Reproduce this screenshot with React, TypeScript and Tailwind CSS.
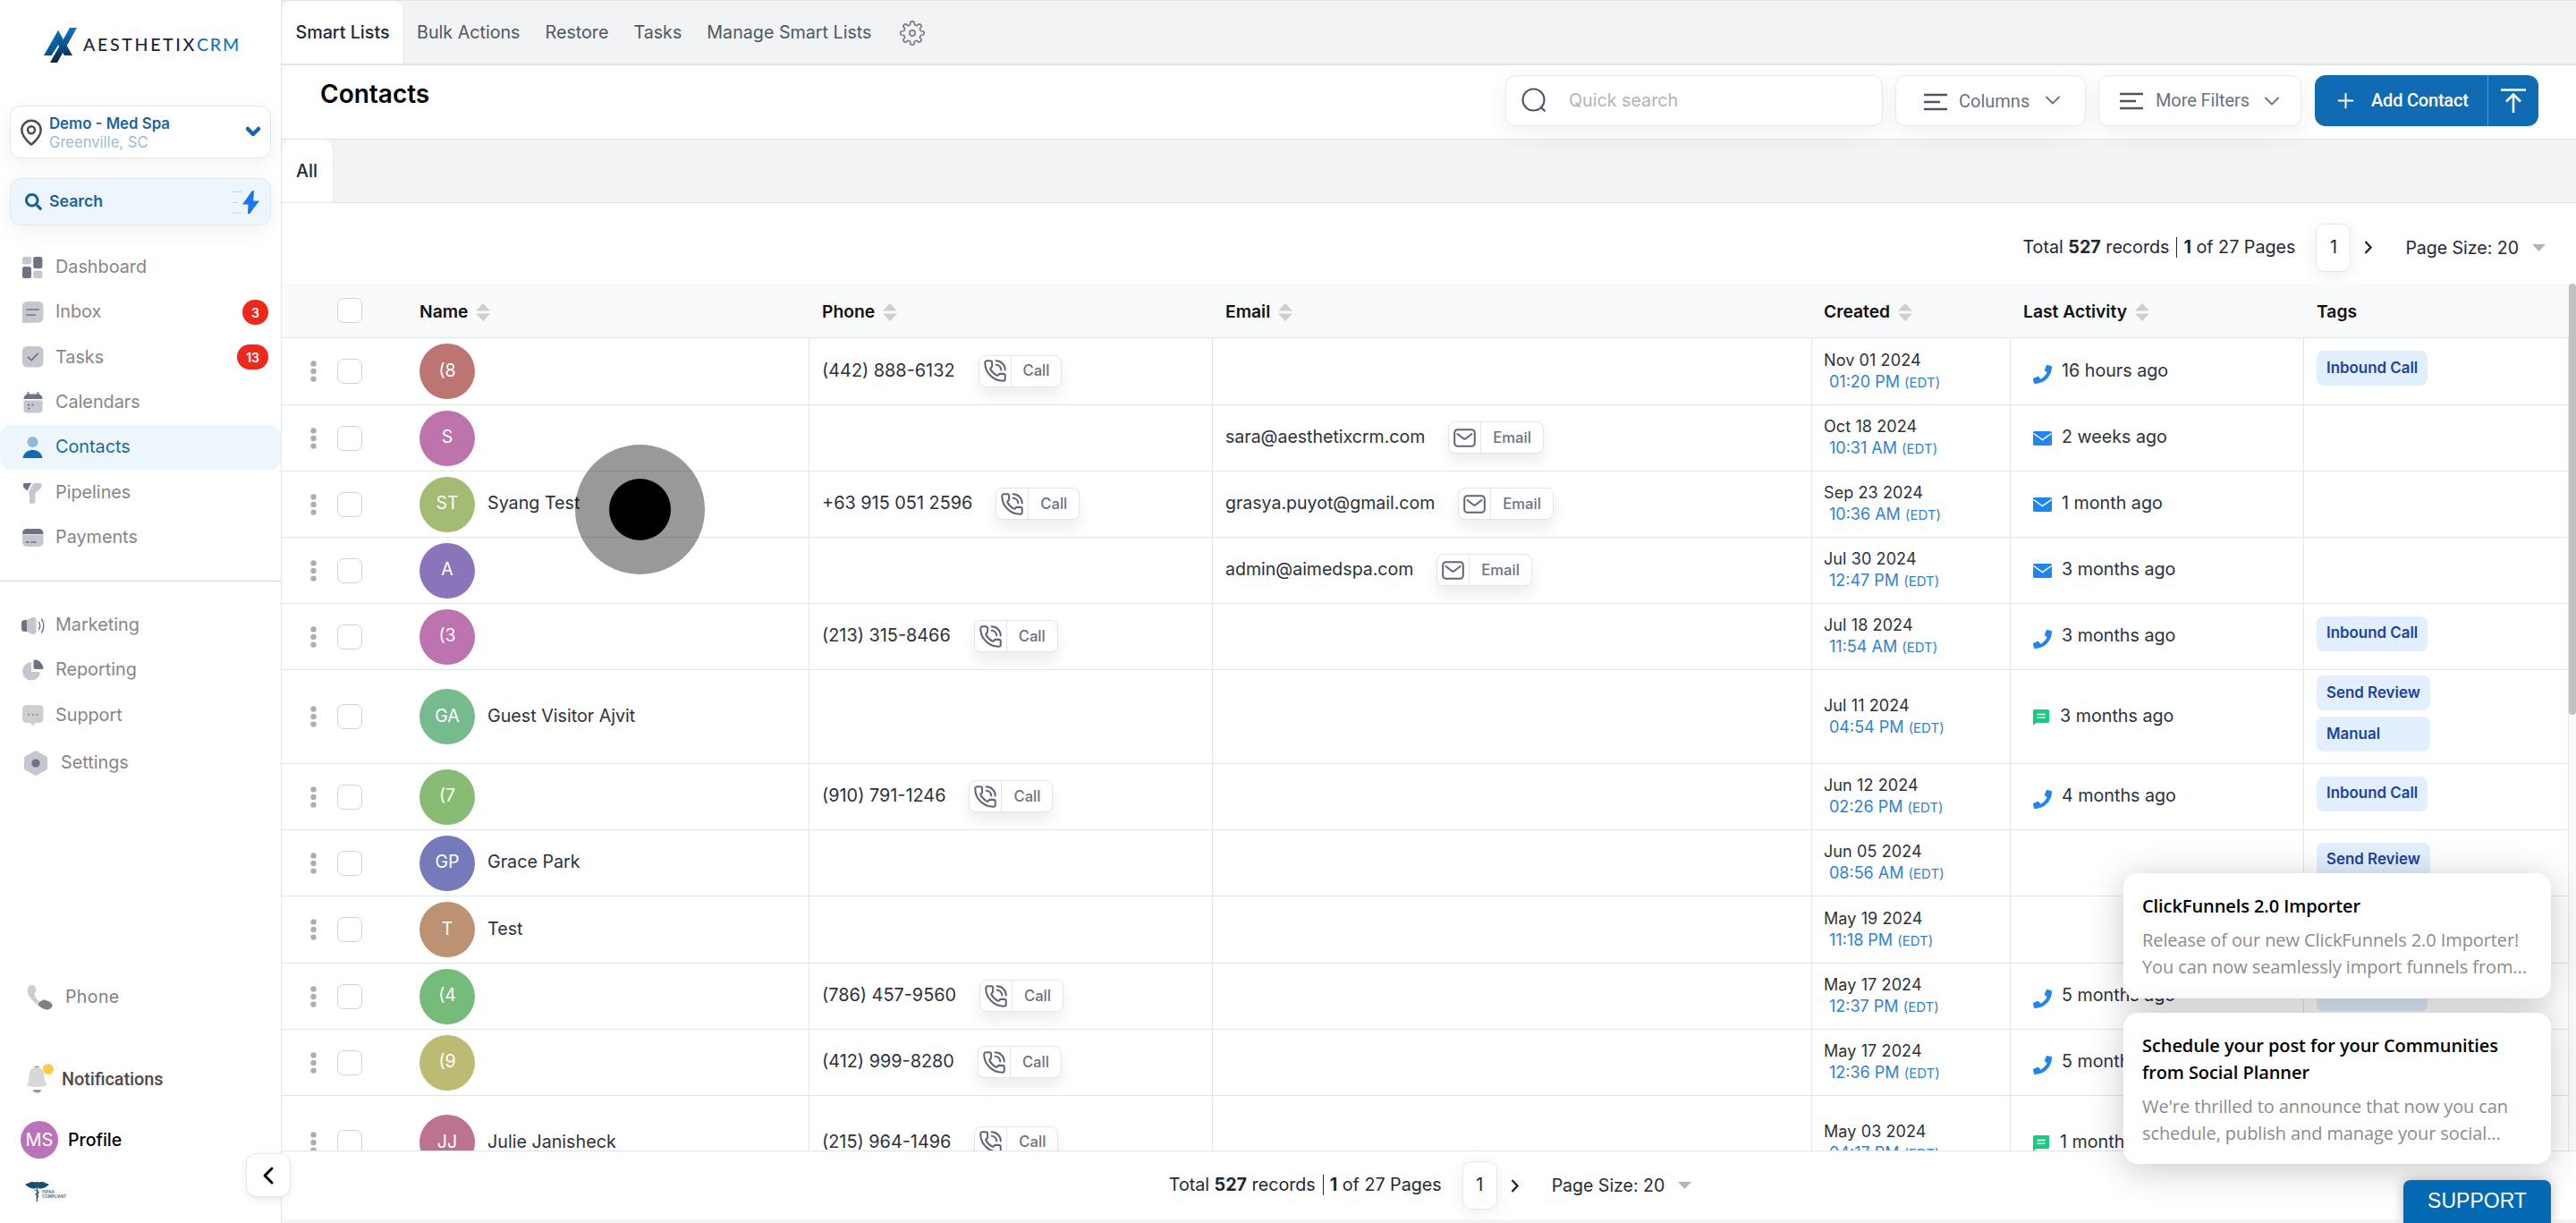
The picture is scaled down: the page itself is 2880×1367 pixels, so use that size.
import type { ReactNode } from 'react';
import clsx from 'clsx';
import { ChevronDown, ChevronLeft, MapPin, PhoneCall, Plus } from 'lucide-react';
import { FaPhone, FaSearch } from 'react-icons/fa';

type Activity = { kind: 'call' | 'email' | 'sms'; text: string };

type Contact = {
  initials: string;
  color: string;
  name?: string;
  phone?: string;
  email?: string;
  date: string;
  time: string;
  activity?: Activity;
  tags?: string[];
  height: string;
};

const contacts: Contact[] = [
  { initials: '(8', color: 'bg-[#bd7572]', phone: '(442) 888-6132', date: 'Nov 01 2024', time: '01:20 PM', activity: { kind: 'call', text: '16 hours ago' }, tags: ['Inbound Call'], height: 'h-[75px]' },
  { initials: 'S', color: 'bg-[#bd73ab]', email: 'sara@aesthetixcrm.com', date: 'Oct 18 2024', time: '10:31 AM', activity: { kind: 'email', text: '2 weeks ago' }, height: 'h-[74px]' },
  { initials: 'ST', color: 'bg-[#a3bb73]', name: 'Syang Test', phone: '+63 915 051 2596', email: 'grasya.puyot@gmail.com', date: 'Sep 23 2024', time: '10:36 AM', activity: { kind: 'email', text: '1 month ago' }, height: 'h-[74px]' },
  { initials: 'A', color: 'bg-[#8a74ba]', email: 'admin@aimedspa.com', date: 'Jul 30 2024', time: '12:47 PM', activity: { kind: 'email', text: '3 months ago' }, height: 'h-[74px]' },
  { initials: '(3', color: 'bg-[#bc73b0]', phone: '(213) 315-8466', date: 'Jul 18 2024', time: '11:54 AM', activity: { kind: 'call', text: '3 months ago' }, tags: ['Inbound Call'], height: 'h-[74px]' },
  { initials: 'GA', color: 'bg-[#75bb8e]', name: 'Guest Visitor Ajvit', date: 'Jul 11 2024', time: '04:54 PM', activity: { kind: 'sms', text: '3 months ago' }, tags: ['Send Review', 'Manual'], height: 'h-[105px]' },
  { initials: '(7', color: 'bg-[#88bc75]', phone: '(910) 791-1246', date: 'Jun 12 2024', time: '02:26 PM', activity: { kind: 'call', text: '4 months ago' }, tags: ['Inbound Call'], height: 'h-[74px]' },
  { initials: 'GP', color: 'bg-[#757abb]', name: 'Grace Park', date: 'Jun 05 2024', time: '08:56 AM', tags: ['Send Review'], height: 'h-[74px]' },
  { initials: 'T', color: 'bg-[#bc9272]', name: 'Test', date: 'May 19 2024', time: '11:18 PM', height: 'h-[75px]' },
  { initials: '(4', color: 'bg-[#75bb7a]', phone: '(786) 457-9560', date: 'May 17 2024', time: '12:37 PM', activity: { kind: 'call', text: '5 months ago' }, tags: ['Inbound Call'], height: 'h-[74px]' },
  { initials: '(9', color: 'bg-[#bcbb73]', phone: '(412) 999-8280', date: 'May 17 2024', time: '12:36 PM', activity: { kind: 'call', text: '5 months ago' }, height: 'h-[74px]' },
  { initials: 'JJ', color: 'bg-[#bc7291]', name: 'Julie Janisheck', phone: '(215) 964-1496', date: 'May 03 2024', time: '04:17 PM', activity: { kind: 'sms', text: '1 month ago' }, height: 'h-[105px]' },
];

const LIGHT = '#c4c8ce';
const DARK = '#6b7482';

const icons: Record<string, ReactNode> = {
  Dashboard: (
    <>
      <rect x="0" y="0" width="10" height="8.5" rx="2" fill={LIGHT} />
      <rect x="12.2" y="0" width="10.2" height="13" rx="2.5" fill={DARK} />
      <rect x="0" y="11" width="10" height="13" rx="2.5" fill={DARK} />
      <rect x="12.2" y="15.5" width="10.2" height="8.5" rx="2" fill={LIGHT} />
    </>
  ),
  Inbox: (
    <>
      <path d="M0 24V5.5A5.5 5.5 0 0 1 5.5 0H18a5.5 5.5 0 0 1 5.5 5.5V18A5.5 5.5 0 0 1 18 23.5Z" fill={LIGHT} />
      <path d="M5 9h13M5 15h9" stroke={DARK} strokeWidth="1.7" strokeLinecap="round" />
    </>
  ),
  Tasks: (
    <>
      <rect width="23.5" height="23.5" rx="5.5" fill={LIGHT} />
      <path d="M6.5 12.3l3.6 3.4 7-7.4" stroke={DARK} strokeWidth="1.8" fill="none" strokeLinecap="round" strokeLinejoin="round" />
    </>
  ),
  Calendars: (
    <>
      <path d="M1.5 9.5h21v10a4 4 0 0 1-4 4h-13a4 4 0 0 1-4-4Z" fill={LIGHT} />
      <path d="M1.5 8a5 5 0 0 1 5-5.5h11a5 5 0 0 1 5 5.5Z" fill={DARK} />
      <path d="M6.5 3.5V1M17.5 3.5V1" stroke={DARK} strokeWidth="2" strokeLinecap="round" />
      <path d="M7 14.5h.1M11.5 14.5h.1M7 18.5h.1" stroke={DARK} strokeWidth="2.2" strokeLinecap="round" />
    </>
  ),
  Contacts: (
    <>
      <circle cx="11.5" cy="6" r="6" fill="#8fb9dc" />
      <path d="M.5 24c1-6 5.5-9 11-9s10 3 11 9Z" fill="#116bb4" />
    </>
  ),
  Pipelines: (
    <>
      <path d="M1 2.5A1.5 1.5 0 0 1 2.5 1H10L5.5 9.5 2 6.5A3 3 0 0 1 1 4.5Z" fill={DARK} />
      <path d="M12.5 1H19.5A2 2 0 0 1 21.5 3V4.5A4 4 0 0 1 20 7.5L14.5 12V21A3 3 0 0 1 11.5 24H10A2 2 0 0 1 8 22V13L6.5 11.5Z" fill={LIGHT} />
    </>
  ),
  Payments: (
    <>
      <path d="M0 8.5h23.5v8.5a5 5 0 0 1-5 5H5a5 5 0 0 1-5-5Z" fill={LIGHT} />
      <path d="M0 8V7a5 5 0 0 1 5-5h13.5a5 5 0 0 1 5 5v1Z" fill={DARK} />
      <path d="M4.5 17h2.5M10 17h5" stroke={DARK} strokeWidth="1.7" strokeLinecap="round" />
    </>
  ),
  Marketing: (
    <>
      <path d="M5 6v13H2.5a3.5 3.5 0 0 1-3.5-3.5v-6A3.5 3.5 0 0 1 2.5 6Z" fill={DARK} />
      <path d="M5 6l6-3a4 4 0 0 1 4.5 1.5v15.5A4 4 0 0 1 11 22l-6-3Z" fill={LIGHT} />
      <path d="M18.5 8.5c1.5 2.5 1.5 5.5 0 8M21.5 5c3 4 3 11 0 15" stroke={DARK} strokeWidth="1.4" fill="none" strokeLinecap="round" />
    </>
  ),
  Reporting: (
    <>
      <path d="M10 3v11h10A10 10.3 0 1 1 10 3Z" fill={LIGHT} />
      <path d="M12.5 1.5C12.5 0 17 0 19.5 2.5S23.5 8 23.5 9.5 22.5 11 22 11H15A2.5 2.5 0 0 1 12.5 8.5Z" fill={DARK} />
    </>
  ),
  Support: (
    <>
      <path d="M4.5 0h14.5a4.5 4.5 0 0 1 4.5 4.5v11a4.5 4.5 0 0 1-4.5 4.5h-4.5l-2.7 3.8-2.8-3.8H4.5A4.5 4.5 0 0 1 0 15.5v-11A4.5 4.5 0 0 1 4.5 0Z" fill="#cfcfcf" />
      <path d="M7 10.8h.1M11.7 10.8h.1M16.5 10.8h.1" stroke="#8b8b8b" strokeWidth="2.2" strokeLinecap="round" />
    </>
  ),
};

const navTop = ['Dashboard', 'Inbox', 'Tasks', 'Calendars', 'Contacts', 'Pipelines', 'Payments'];
const navBottom = ['Marketing', 'Reporting', 'Support'];
const badges: Record<string, string> = { Inbox: '3', Tasks: '13' };

function NavItem({ label }: { label: string }) {
  const active = label === 'Contacts';
  return (
    <div className={clsx('flex h-[50.4px] items-center pr-[14px] pl-[25px]', active && 'rounded-xl bg-[#edf6fb]')}>
      <svg className="h-6 w-6 shrink-0 overflow-visible" viewBox="0 0 24 24">
        {icons[label]}
      </svg>
      <span className={clsx('ml-[13px] text-[19.8px]', active ? 'text-[#1767a6]' : 'text-[#868686]')}>{label}</span>
      {badges[label] && (
        <span className="ml-auto flex h-7 min-w-[29px] items-center justify-center rounded-full bg-[#ee291b] px-[10px] text-[14px] font-semibold text-white">
          {badges[label]}
        </span>
      )}
    </div>
  );
}

function Sidebar() {
  return (
    <aside className="flex h-full w-[315px] shrink-0 flex-col border-r border-[#e1e4e8] bg-white">
      <div className="flex h-[118px] items-start pt-[31px] pl-[49px]">
        <svg width="38" height="39" viewBox="0 0 38 39">
          <defs>
            <linearGradient id="markA" gradientUnits="userSpaceOnUse" x1="0" y1="0" x2="0" y2="31">
              <stop offset="0" stopColor="#0f76c0" />
              <stop offset="1" stopColor="#0b4f88" />
            </linearGradient>
            <linearGradient id="markB" gradientUnits="userSpaceOnUse" x1="0" y1="0" x2="0" y2="39">
              <stop offset="0" stopColor="#0f76c0" />
              <stop offset="0.45" stopColor="#0b5692" />
              <stop offset="1" stopColor="#0a2440" />
            </linearGradient>
          </defs>
          <path d="M0 31L16 3l5 9L8.500 31Z" fill="url(#markA)" />
          <path d="M29 0h8L15 39H7Z" fill="url(#markB)" />
          <path d="M16 3l16 28h-9L12 12Z" fill="url(#markB)" />
        </svg>
        <div className="mt-[6px] ml-[6px] font-[Lato] text-[19.5px] leading-[26px] font-medium whitespace-nowrap">
          <span className="tracking-[2.7px] text-[#1d2733]">AESTHETIX</span>
          <span className="tracking-[1.8px] text-[#1574b9]">CRM</span>
        </div>
      </div>

      <div className="mx-[11px] flex h-[59px] items-center rounded-xl border border-[#e2e6eb] pr-[7px] pl-[7px] shadow-[0_6px_24px_rgba(0,0,0,0.06)]">
        <MapPin className="h-[34px] w-[32px] text-[#4a4f59]" strokeWidth={1.9} />
        <div className="ml-[4px] pt-[3px] leading-[21px]">
          <div className="text-[16.8px] font-semibold text-[#1a64a0]">Demo - Med Spa</div>
          <div className="text-[16.6px] text-[#9ebbd3]">Greenville, SC</div>
        </div>
        <ChevronDown className="ml-auto h-[24px] w-[24px] -translate-y-[1px] text-[#1565a8]" strokeWidth={4.5} />
      </div>

      <div className="mx-[11px] mt-[22px] flex h-[53px] items-center rounded-xl border border-[#dfebf3] bg-[#edf6fc] pr-[12px] pl-[16px] shadow-[0_6px_24px_rgba(0,0,0,0.06)]">
        <FaSearch className="h-[19px] w-[19px] text-[#1d5f93]" />
        <span className="ml-[8px] pb-px text-[17.7px] font-semibold text-[#1c6299]">Search</span>
        <svg className="ml-auto" width="30" height="26" viewBox="0 0 30 26">
          <path d="M0 1.5h11M1 13.5h4M0 25h9" stroke="#c3cfdb" strokeWidth="1" />
          <path d="M22 0l2 .5-.8 11H30L19 26h-2l.5-10.5H11Z" fill="#1877f2" />
        </svg>
      </div>

      <div className="mt-[21.5px]">
        {navTop.map((label) => (
          <NavItem key={label} label={label} />
        ))}
      </div>

      <div className="mt-[22.5px] border-t border-[#cfd3d8] pt-[24px]">
        {navBottom.map((label) => (
          <NavItem key={label} label={label} />
        ))}
        <div className="flex h-[56px] items-center pl-[27px]">
          <svg width="26" height="28" viewBox="0 0 26 28">
            <path d="M13 1.5L24.5 8v12L13 26.5 1.5 20V8Z" fill={LIGHT} stroke={LIGHT} strokeWidth="3" strokeLinejoin="round" />
            <circle cx="13" cy="14" r="4.6" fill={DARK} />
          </svg>
          <span className="ml-[15px] text-[19.8px] text-[#868686]">Settings</span>
        </div>
      </div>

      <div className="mt-auto flex flex-col pb-[20px]">
        <div className="flex h-[40px] items-center pl-[30px]">
          <svg width="29" height="29" viewBox="0 0 29 29">
            <path d="M1 5C2 1 6 0 8 1.5c2 2 3 5 2 7L8.5 11c.5 3 2.5 6 5.5 8.5l-2.5 3C5 18-1 10.5 1 5Z" fill="#cdcdcd" />
            <path d="M12 23l2.5-3.5c2 0 3-2.5 5-2s8.5 2.5 9 5.5-3 5.5-6 5.5-7-2.5-10.5-5.5Z" fill="#808080" />
          </svg>
          <span className="ml-[14px] pt-[2px] text-[19.5px] tracking-[0.4px] text-[#7c8089]">Phone</span>
        </div>
        <div className="mt-[49px] flex h-[44px] items-center pl-[30px]">
          <svg width="31" height="34" viewBox="0 0 31 34">
            <path d="M8 5.5a3 2 0 0 1 6 0ZM7 30h9a4 3 0 0 1-9 0Z" fill="#9a9a9a" />
            <path d="M11 5c6 0 8 4 8.5 9 .5 5 .5 7 2.5 9.5.5 2-1 3.5-11 3.5S-.5 25.5.5 23.5C2.5 21 2 19 2.5 14 3 9 5 5 11 5Z" fill="#d8d8d8" />
            <circle cx="24" cy="7" r="6" fill="#fdcb4c" />
          </svg>
          <span className="ml-[8px] pt-[3px] font-[Roboto] text-[19.8px] font-medium text-[#4b4b4b]">Notifications</span>
        </div>
        <div className="mt-[25px] flex h-[44px] items-center pl-[23px]">
          <span className="flex h-[42px] w-[42px] items-center justify-center rounded-full bg-[#bc74b9] text-[20px] text-white">MS</span>
          <span className="ml-[11px] pt-px text-[19.5px] font-medium text-black">Profile</span>
        </div>
        <div className="mt-[24px] flex h-[27px] items-start pl-[28px]">
          <svg width="27" height="24" viewBox="0 0 27 24">
            <path d="M0 4C4 3 6 0 11 1.5L13.5 1 16 1.5C21 0 23 3 27 4c-3 2-4 4.5-11 4.5L13.5 7 11 8.5C4 8.5 3 6 0 4Z" fill="#14506f" />
            <path d="M13.5 2v21" stroke="#1f5f7d" strokeWidth="1.4" />
            <path d="M10.5 10c6 1 6 4 1 5 4 1 4 3 1 4" stroke="#1f5f7d" strokeWidth="1.2" fill="none" />
          </svg>
          <div className="-ml-[8px] pt-[11px] text-[4.5px] leading-[4.8px] font-semibold text-[#44697d]">
            <div>HIPAA</div>
            <div>COMPLIANT</div>
          </div>
        </div>
      </div>
    </aside>
  );
}

function GearIcon() {
  const teeth = Array.from({ length: 8 }, (_, i) => i * 45);
  const point = (deg: number, r: number) => {
    const a = (deg * Math.PI) / 180;
    return `${(14 + r * Math.sin(a)).toFixed(2)} ${(14 - r * Math.cos(a)).toFixed(2)}`;
  };
  const d = teeth
    .map((t, i) => `${i ? 'L' : 'M'}${point(t - 15, 9.6)}L${point(t - 9, 12.6)}Q${point(t, 14)} ${point(t + 9, 12.6)}L${point(t + 15, 9.6)}`)
    .join('');
  return (
    <svg width="28" height="28" viewBox="0 0 28 28" fill="none" stroke="#7b8086" strokeWidth="1.7" strokeLinejoin="round">
      <path d={`${d}Z`} />
      <circle cx="14" cy="14" r="3.2" />
    </svg>
  );
}

function LinesIcon() {
  return (
    <svg width="26" height="20" viewBox="0 0 26 20" stroke="#4b5563" strokeWidth="2.4">
      <path d="M0 2h26M0 10h18M0 18h26" />
    </svg>
  );
}

function MailIcon() {
  return (
    <svg width="25" height="21" viewBox="0 0 25 21" fill="none" stroke="currentColor" strokeWidth="2" strokeLinecap="round" strokeLinejoin="round">
      <rect x="1.2" y="1.2" width="22.6" height="18.6" rx="3.5" />
      <path d="M4.5 6l6.4 5a2.6 2.6 0 0 0 3.2 0l6.4-5" />
    </svg>
  );
}

function SortIcon() {
  return (
    <svg width="16" height="20" viewBox="0 0 16 20" fill="#cfcfcf">
      <path d="M8 0l8 8.5H0Z" />
      <path d="M8 20l8-8.5H0Z" />
    </svg>
  );
}

function Checkbox() {
  return <span className="block h-[28px] w-[28px] shrink-0 rounded-[7px] border border-[#d0d3d7] bg-white" />;
}

function Pagination() {
  return (
    <div className="flex items-center text-[19.7px] text-[#1f2933]">
      <span className="flex items-center whitespace-pre">
        Total <b className="font-bold">527</b> records
        <span className="mr-[7px] ml-[8px] h-[23px] w-px bg-[#1f2933]" />
        <b className="font-bold">1</b> of 27 Pages
      </span>
      <span className="ml-[23px] flex h-[54px] w-[39px] items-center justify-center rounded-[10px] border border-[#e5e7eb] bg-white shadow-[0_4px_20px_rgba(0,0,0,0.07)]">
        1
      </span>
      <svg className="ml-[15px]" width="10" height="15" viewBox="0 0 10 15" fill="none" stroke="#1f2933" strokeWidth="2.4">
        <path d="M1.5 1l6 6.5-6 6.5" />
      </svg>
      <span className="ml-[36px] pt-[2px] text-[19.5px]">Page Size: 20</span>
      <svg className="ml-[15px]" width="15" height="8" viewBox="0 0 15 8" fill="#b0b5ba">
        <path d="M0 0h15L7.5 8Z" />
      </svg>
    </div>
  );
}

function TopNav() {
  return (
    <nav className="flex h-[73px] items-stretch border-t border-b-2 border-[#e3e5e8] bg-[#f2f3f5] text-[19.7px] text-[#4f5761]">
      <div className="flex w-[137px] items-center justify-center rounded-t-xl border-r border-[#e3e5e8] bg-white pt-px font-medium text-[#1f2937]">
        Smart Lists
      </div>
      <div className="flex items-center gap-[28px] pt-px pl-[14px]">
        <span>Bulk Actions</span>
        <span>Restore</span>
        <span>Tasks</span>
        <span>Manage Smart Lists</span>
        <span className="ml-[3px]">
          <GearIcon />
        </span>
      </div>
    </nav>
  );
}

function PageHeader() {
  const field = 'flex h-[57px] items-center rounded-[11px] border border-[#e7e9ec] bg-white shadow-[0_8px_28px_rgba(0,0,0,0.06)]';
  return (
    <header className="relative z-10 flex h-[82px] items-start pt-[11px] pr-[42px] pl-[43px]">
      <h1 className="text-[28px] leading-[42px] font-semibold text-black">Contacts</h1>
      <div className="ml-auto flex">
        <div className={clsx(field, 'w-[422px] pl-[17px]')}>
          <svg className="-mt-[2px]" width="28" height="28" viewBox="0 0 28 28" fill="none" stroke="#4b5563" strokeWidth="2.2">
            <circle cx="13.5" cy="13.5" r="12" />
            <path d="M21.5 21.5l5 5" />
          </svg>
          <span className="ml-[25px] text-[19.7px] text-[#b0b4b9]">Quick search</span>
        </div>
        <div className={clsx(field, 'ml-[14px] w-[213px] pt-[3px] pl-[31px] font-[Roboto] text-[20px] text-[#6b7280]')}>
          <LinesIcon />
          <span className="ml-[13px] pb-[2px]">Columns</span>
          <ChevronDown className="mt-[-4px] ml-[12px] h-[28px] w-[28px]" strokeWidth={1.6} />
        </div>
        <div className={clsx(field, 'ml-[14px] w-[227px] pl-[23px] font-[Roboto] text-[20px] text-[#6b7280]')}>
          <LinesIcon />
          <span className="ml-[14px] pb-[2px] tracking-[-0.1px]">More Filters</span>
          <ChevronDown className="ml-[11px] h-[28px] w-[28px]" strokeWidth={1.6} />
        </div>
        <div className="ml-[15px] flex h-[57px] w-[250px] items-center rounded-[12px] bg-[#116bb3] font-[Roboto] text-[20px] font-medium text-white">
          <div className="flex h-full w-[194px] items-center border-r border-[#5b9acd] pl-[21px]">
            <Plus className="h-[27px] w-[27px]" strokeWidth={1.7} />
            <span className="ml-[15px] pb-px tracking-[-0.2px]">Add Contact</span>
          </div>
          <svg className="ml-[13px]" width="30" height="30" viewBox="0 0 30 30" fill="none" stroke="#fff" strokeWidth="2.5">
            <path d="M1 2.5h28M15 28V8M7 15.5L15 7.5l8 8" />
          </svg>
        </div>
      </div>
    </header>
  );
}

function ActionButton({ label, icon }: { label: string; icon: ReactNode }) {
  return (
    <span className="mb-px ml-[26px] flex h-[36px] items-center rounded-[8px] border border-[#e3e5ea] bg-white shadow-[0_10px_16px_rgba(0,0,0,0.07)]">
      <span className="flex h-full w-[36px] items-center justify-center border-r border-[#e3e5ea] text-[#5f6673]">{icon}</span>
      <span className="px-[13px] text-[16.6px] font-medium text-[#6b7280]">{label}</span>
    </span>
  );
}

function ActivityIcon({ kind }: { kind: Activity['kind'] }) {
  if (kind === 'call') return <FaPhone className="mt-[6px] mr-[11px] h-[21px] w-[21px] text-[#1f86f0]" />;
  if (kind === 'email') {
    return (
      <svg className="mr-[11px]" width="21" height="16" viewBox="0 0 21 16">
        <rect width="21" height="16" rx="1.5" fill="#1f86f0" />
        <path d="M.5 2.5l10 7 10-7" fill="none" stroke="#fff" strokeWidth="1.5" />
      </svg>
    );
  }
  return (
    <svg className="mt-[2px] mr-[12px]" width="18" height="18" viewBox="0 0 18 18">
      <path d="M1.5 0h15A1.5 1.5 0 0 1 18 1.5v12A1.5 1.5 0 0 1 16.5 15H3.5L0 18V1.5A1.5 1.5 0 0 1 1.5 0Z" fill="#10cf7d" />
      <path d="M4.5 5.5h9M4.5 9h9" stroke="#fff" strokeWidth="1.4" />
    </svg>
  );
}

const GRID = 'grid grid-cols-[590px_451px_670px_222px_328px_296px]';
const CELL = 'flex items-center border-r border-[#e1e4e8] pl-[14px]';

function ContactRow({ contact }: { contact: Contact }) {
  return (
    <div className={clsx(GRID, contact.height, 'shrink-0 border-b border-[#e1e4e8] text-[19.7px] text-[#2b323b]')}>
      <div className="flex items-center border-r border-[#e1e4e8] pl-[32px]">
        <svg width="7" height="24" viewBox="0 0 7 24" fill="#a9afb3">
          <circle cx="3.5" cy="3.4" r="3.2" />
          <circle cx="3.5" cy="12" r="3.2" />
          <circle cx="3.5" cy="20.6" r="3.2" />
        </svg>
        <span className="ml-[23px]">
          <Checkbox />
        </span>
        <span className={clsx('ml-[64px] flex h-[62px] w-[62px] items-center justify-center rounded-full pb-px text-[19.5px] text-white', contact.color)}>
          {contact.initials}
        </span>
        <span className="ml-[14px] pb-px">{contact.name}</span>
      </div>
      <div className={CELL}>
        {contact.phone && (
          <>
            <span className="pb-px text-[19.85px]">{contact.phone}</span>
            <ActionButton label="Call" icon={<PhoneCall className="h-[27px] w-[27px]" strokeWidth={1.8} />} />
          </>
        )}
      </div>
      <div className={CELL}>
        {contact.email && (
          <>
            <span className="pb-px text-[19.55px]">{contact.email}</span>
            <ActionButton label="Email" icon={<MailIcon />} />
          </>
        )}
      </div>
      <div className="flex flex-col justify-center border-r border-[#e1e4e8] pl-[13px] text-[18px] leading-6">
        <span className="tracking-[0.1px]">{contact.date}</span>
        <span className="pl-[6px] text-[#3083cf]">
          {contact.time} <span className="text-[15px]">(EDT)</span>
        </span>
      </div>
      <div className="flex items-center border-r border-[#e1e4e8] pl-[25px]">
        {contact.activity && (
          <>
            <ActivityIcon kind={contact.activity.kind} />
            <span className="pb-px">{contact.activity.text}</span>
          </>
        )}
      </div>
      <div className="flex items-center border-r border-[#e1e4e8] pl-[14px]">
        <div className="flex flex-col">
          {contact.tags?.map((tag) => (
            <span key={tag} className="mb-[7px] flex h-[39px] items-center rounded-[8px] bg-[#e1effe] px-[11px] text-[16.9px] font-semibold text-[#1e429f]">
              {tag}
            </span>
          ))}
        </div>
      </div>
    </div>
  );
}

function ContactsTable() {
  return (
    <div className="flex h-[969px]">
      <div className="flex h-full w-[2557px] shrink-0 flex-col overflow-hidden">
        <div className={clsx(GRID, 'h-[61px] shrink-0 items-center border-b border-[#dfe3e7] bg-[#f9fafb] pt-[3px] text-[19.3px] font-semibold text-[#111]')}>
          <div className="flex h-[32px] items-center gap-[9px] pl-[62px]">
            <span className="mr-[55px] -translate-y-[2px]">
              <Checkbox />
            </span>
            Name <SortIcon />
          </div>
          <div className="flex items-center gap-[9px] pl-[14px]">
            Phone <SortIcon />
          </div>
          <div className="flex items-center gap-[9px] pl-[14px]">
            Email <SortIcon />
          </div>
          <div className="flex items-center gap-[9px] pl-[13px]">
            Created <SortIcon />
          </div>
          <div className="flex items-center gap-[9px] pl-[14px]">
            Last Activity <SortIcon />
          </div>
          <div className="pl-[14px]">Tags</div>
        </div>
        {contacts.map((contact) => (
          <ContactRow key={contact.initials} contact={contact} />
        ))}
      </div>
      <div className="h-full w-[8px] bg-[#fafafa]">
        <div className="h-[482px] w-full rounded-full bg-[#c1c1c1]" />
      </div>
    </div>
  );
}

function Toast({ title, children }: { title: ReactNode; children: ReactNode }) {
  return (
    <div className="w-[478px] rounded-2xl bg-white px-[21px] pt-[22px] font-['Open_Sans'] leading-[30px] shadow-[0_6px_40px_rgba(0,0,0,0.22)]">
      <div className="text-[20px] font-semibold tracking-[-0.08px] whitespace-nowrap text-black">{title}</div>
      <div className="mt-[8px] text-[20px] tracking-[-0.09px] whitespace-nowrap text-[#8c8c8c]">{children}</div>
    </div>
  );
}

export default function App() {
  return (
    <div className="relative flex h-[1367px] w-[2880px] overflow-hidden bg-white font-[Inter,sans-serif]">
      <Sidebar />
      <main className="flex h-full flex-1 flex-col">
        <TopNav />
        <PageHeader />
        <div className="flex h-[72px] items-stretch border-y border-[#e3e5e8] bg-[#f2f3f5]">
          <div className="flex w-[58px] items-center rounded-t-xl border-r border-[#e3e5e8] bg-white pt-px pl-[16px] text-[19.7px] font-medium text-[#1f2937]">
            All
          </div>
        </div>
        <div className="flex h-[90px] items-center justify-end pt-[9px] pr-[34px]">
          <Pagination />
        </div>
        <ContactsTable />
        <footer className="flex h-[81px] items-start justify-center border-t border-b-4 border-[#e1e4e8] border-b-[#f2f6f9] pt-[11px] pl-[3px]">
          <Pagination />
        </footer>
      </main>

      <button className="absolute top-[1289px] left-[275px] flex h-[49px] w-[50px] items-center justify-center rounded-xl border border-[#e3e6ea] bg-white shadow-[0_3px_10px_rgba(0,0,0,0.08)]">
        <ChevronLeft className="h-[32px] w-[32px] text-black" strokeWidth={2.2} />
      </button>

      <div className="absolute top-[497px] left-[643px] flex h-[145px] w-[145px] items-center justify-center rounded-full bg-black/40">
        <div className="h-[69px] w-[69px] rounded-full bg-black" />
      </div>

      <div className="absolute top-[976px] right-[28px] flex flex-col items-end">
        <div className="flex flex-col gap-[16px]">
          <div className="flex h-[140px]">
            <Toast title="ClickFunnels 2.0 Importer">
              Release of our new ClickFunnels 2.0 Importer!
              <br />
              You can now seamlessly import funnels from...
            </Toast>
          </div>
          <div className="flex h-[169px]">
            <Toast
              title={
                <>
                  Schedule your post for your Communities
                  <br />
                  from Social Planner
                </>
              }
            >
              We're thrilled to announce that now you can
              <br />
              schedule, publish and manage your social...
            </Toast>
          </div>
        </div>
        <button className="mt-[18px] h-[48px] w-[165px] rounded-t-lg bg-[#0469b3] pb-px font-['Liberation_Sans'] text-[23px] text-white shadow-[0_0_14px_rgba(0,0,0,0.25)]">
          SUPPORT
        </button>
      </div>
    </div>
  );
}
